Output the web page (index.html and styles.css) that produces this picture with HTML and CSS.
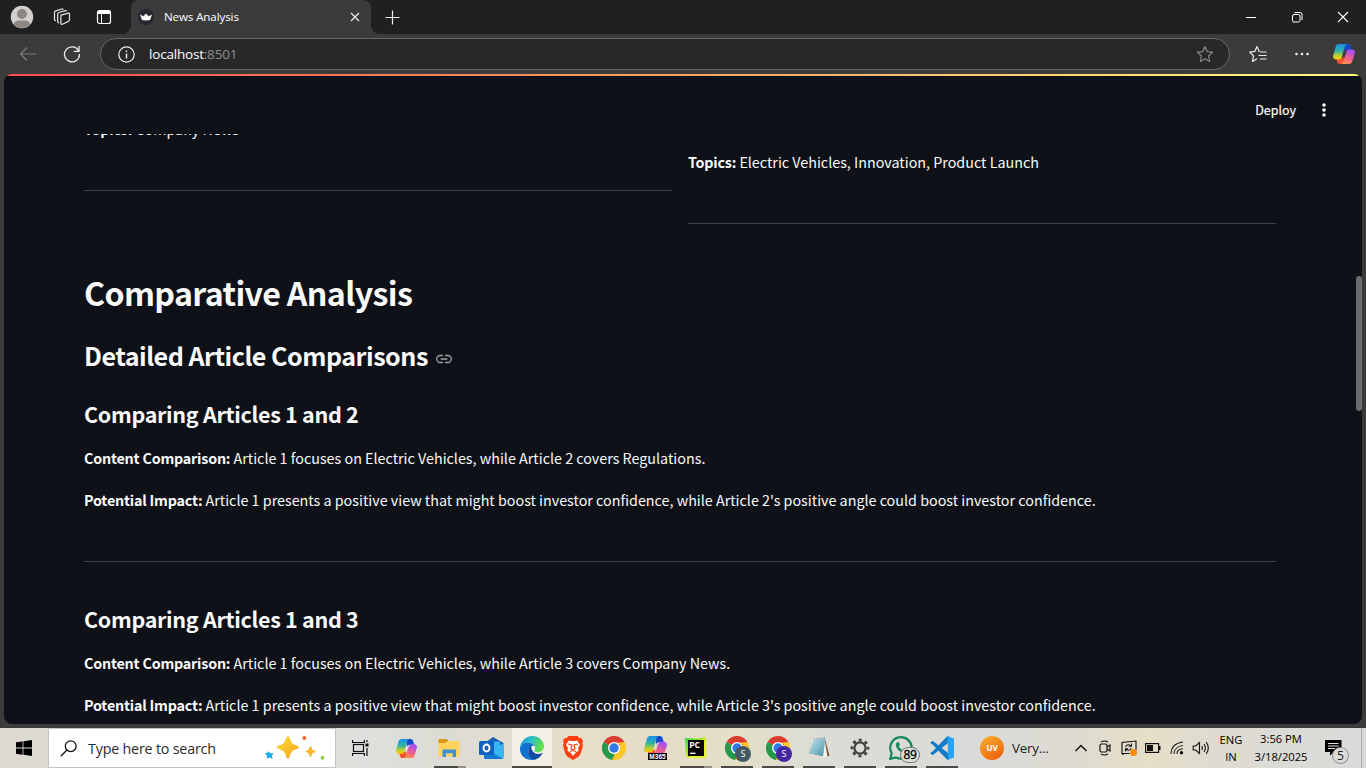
FILE: index.html
```html
<!DOCTYPE html>
<html lang="en">
<head>
<meta charset="utf-8">
<title>News Analysis</title>
<link rel="stylesheet" href="styles.css">
</head>
<body>
<svg class="defs" width="0" height="0" aria-hidden="true">
  <defs>
    <linearGradient id="cpL" x1="0" y1="0" x2="0" y2="1"><stop offset="0" stop-color="#1a8fe8"/><stop offset=".45" stop-color="#2fb3a5"/><stop offset=".75" stop-color="#b5d32e"/><stop offset="1" stop-color="#ffc800"/></linearGradient>
    <linearGradient id="cpR" x1=".3" y1="0" x2="0" y2="1"><stop offset="0" stop-color="#a850f0"/><stop offset=".5" stop-color="#f2608c"/><stop offset="1" stop-color="#ff9a3c"/></linearGradient>
    <linearGradient id="edgeA" x1="0" y1="0" x2="1" y2=".3"><stop offset="0" stop-color="#1b8fdc"/><stop offset=".5" stop-color="#2ac0c8"/><stop offset="1" stop-color="#63e04a"/></linearGradient>
    <linearGradient id="uv" x1="0" y1="0" x2=".6" y2="1"><stop offset="0" stop-color="#f5b42d"/><stop offset="1" stop-color="#f2640f"/></linearGradient>
    <linearGradient id="note" x1="0" y1="0" x2="1" y2="1"><stop offset="0" stop-color="#c5e6ee"/><stop offset="1" stop-color="#4c93a8"/></linearGradient>
    <linearGradient id="pyc" x1="0" y1="0" x2="1" y2="1"><stop offset="0" stop-color="#21d759"/><stop offset=".35" stop-color="#8be81f"/><stop offset=".6" stop-color="#e6f02a"/><stop offset="1" stop-color="#e6ee3a"/></linearGradient>
    <linearGradient id="star" x1="0" y1="0" x2="1" y2="1"><stop offset="0" stop-color="#ffdc38"/><stop offset="1" stop-color="#f7a31c"/></linearGradient>
    <symbol id="copilot" viewBox="0 0 24 24">
      <path d="M12 2h4.200c1.600 0 2.300.9 2.700 2.200L20 8h-4.500c-1.600 0-2.600.8-3 2.200z" fill="#1747c9"/>
      <path d="M12 22H7.800c-1.600 0-2.300-.9-2.700-2.200L4.300 16H9c1.400 0 2.200-.7 2.600-2z" fill="#f2542f"/>
      <path d="M7 2h8.200c-1.100 0-1.800.8-2.200 2l-3.200 11c-.5 1.700-1.400 2.500-3 2.500H3.700C1.600 17.500.7 15.600 1.200 13.600L3.600 5C4.200 3 5.200 2 7 2z" fill="url(#cpL)"/>
      <path d="M17 22H8.800c1.100 0 1.800-.8 2.200-2l3.200-9.500c.5-1.700 1.400-3 3-3h3.100c2.100 0 3 1.900 2.500 3.900L20.400 19c-.6 2-1.600 3-3.400 3z" fill="url(#cpR)"/>
    </symbol>
    <symbol id="chrome" viewBox="0 0 24 24">
      <path d="M12 12L1.600 6A12 12 0 0 1 22.400 6z" fill="#dc3b30"/>
      <path d="M12 12L22.400 6A12 12 0 0 1 12 24z" fill="#fdc727"/>
      <path d="M12 12v12A12 12 0 0 1 1.600 6z" fill="#24994a"/>
      <path d="M12 6h10.400a12 12 0 0 1 .9 2H12z" fill="#fdc727"/>
      <path d="M12 6h10.400L12 7z" fill="#dc3b30"/>
      <path d="M17.200 15L12 24l-2-.2 3-6z" fill="#fdc727"/>
      <path d="M6.800 15L1.600 6l5.400 5z" fill="#24994a"/>
      <circle cx="12" cy="12" r="6" fill="#fff"/><circle cx="12" cy="12" r="4.700" fill="#3478e8"/>
    </symbol>
  </defs>
</svg>

<div class="screen">
  <div class="tabstrip">
    <div class="tab-tools">
      <svg class="avatar" width="24" height="24" viewBox="0 0 24 24"><circle cx="12" cy="12" r="11.200" fill="#d2d0ce"/><circle cx="12" cy="9" r="5" fill="#8d8782"/><path d="M4 19.500c0-3 2.500-4 5-4h6c2.500 0 5 1 5 4a11.200 11.200 0 0 1-16 0z" fill="#8d8782"/></svg>
      <svg class="workspaces" width="18" height="18" viewBox="0 0 18 18" fill="none" stroke="#e6e6e6" stroke-width="1.200" stroke-linejoin="round"><path d="M8 7.200l7.200-2c.8-.2 1.300.2 1.300.9v5.700c0 .8-.4 1.300-1.100 1.600l-6 2.800c-.9.300-1.500 0-1.500-.8V7.900z"/><path d="M6.200 14.600c-1 .2-1.500-.2-1.500-1V6c0-.8.400-1.300 1.100-1.500l6.500-1.900c.8-.2 1.200.1 1.300.8"/><path d="M3 12.500c-1 .2-1.500-.2-1.500-1V4.300C1.500 3.500 2 3 2.700 2.800L8.900 1c.8-.2 1.200.1 1.300.7"/></svg>
      <svg class="vertical-tabs" width="16" height="16" viewBox="0 0 16 16" fill="none" stroke="#fff"><rect x="1.500" y="1.500" width="13" height="13" rx="2" stroke-width="1.200"/><path d="M2 3.500h12" stroke-width="3"/><path d="M5.500 5v9" stroke-width="1"/></svg>
    </div>
    <div class="tab">
      <svg width="16" height="16" viewBox="0 0 16 16"><circle cx="8" cy="8" r="8" fill="#262730"/><path d="M2 5.500l3.300 1.700L8 4.600l2.700 2.600L14 5.500l-2 5.500c-2 .5-6 .5-8 0z" fill="#fff"/></svg>
      <span class="tab-title">News Analysis</span>
      <svg width="10" height="10" viewBox="0 0 10 10" stroke="#eee" stroke-width="1.200"><path d="M1 1l8 8M9 1L1 9"/></svg>
    </div>
    <svg class="new-tab" width="15" height="15" viewBox="0 0 15 15" stroke="#eee" stroke-width="1.200"><path d="M7.500.5v14M.5 7.500h14"/></svg>
    <div class="window-buttons">
      <svg width="12" height="12" viewBox="0 0 12 12" stroke="#fff"><path d="M1 6.500h10"/></svg>
      <svg width="12" height="12" viewBox="0 0 12 12" fill="none" stroke="#fff"><rect x="1.500" y="3.500" width="7.500" height="7.500" rx="1.500"/><path d="M3.500 1.500h5.500a2 2 0 0 1 2 2V9"/></svg>
      <svg width="12" height="12" viewBox="0 0 12 12" stroke="#fff" stroke-width="1.100"><path d="M1 1l10 10M11 1L1 11"/></svg>
    </div>
  </div>

  <div class="toolbar">
    <svg class="back" width="18" height="16" viewBox="0 0 18 16" fill="none" stroke="#7c7c7c" stroke-width="1.200"><path d="M17 8H1.500M8 1.500L1.500 8 8 14.500"/></svg>
    <svg class="reload" width="18" height="18" viewBox="0 0 18 18" fill="none" stroke="#eee" stroke-width="1.300"><path d="M15.800 6.200A7.500 7.500 0 1 0 16.500 9"/><path d="M16 1v5.300h-5.300"/></svg>
    <div class="address">
      <svg width="17" height="17" viewBox="0 0 17 17" fill="none" stroke="#eee" stroke-width="1.200"><circle cx="8.500" cy="8.500" r="7.700"/><path d="M8.500 7.500v5M8.500 4.500V6" stroke-width="1.400"/></svg>
      <span class="url">localhost<span class="port">:8501</span></span>
      <svg class="fav" width="18" height="18" viewBox="0 0 18 18" fill="none" stroke="#858585" stroke-width="1.200" stroke-linejoin="round"><path d="M9 1.500l2.200 5.100 5.400.6-4 3.800 1.100 5.500L9 13.800l-4.700 2.700L5.400 11l-4-3.800 5.400-.6z"/></svg>
    </div>
    <svg class="favorites" width="18" height="18" viewBox="0 0 18 18" fill="none" stroke="#eee" stroke-width="1.200" stroke-linejoin="round"><path d="M10.800 6.500l-.6-.1L8 1.500 5.800 6.400l-5.100.7 3.800 3.800-1 5.500L8 13.700"/><path d="M11 7h6.500M9.500 10.500h8M11 14h6.500"/></svg>
    <svg class="more" width="16" height="4" viewBox="0 0 16 4" fill="#eee"><circle cx="2.500" cy="2" r="1.300"/><circle cx="8" cy="2" r="1.300"/><circle cx="13.500" cy="2" r="1.300"/></svg>
    <svg class="sidebar-copilot" width="24" height="24"><use href="#copilot"/></svg>
  </div>

  <div class="viewport">
    <div class="app">
      <div class="app-header">
        <span class="deploy">Deploy</span>
        <svg width="4" height="16" viewBox="0 0 4 16" fill="#fafafa"><circle cx="2" cy="3" r="1.800"/><circle cx="2" cy="8" r="1.800"/><circle cx="2" cy="13" r="1.800"/></svg>
      </div>
      <div class="content">
        <div class="columns">
          <div class="column">
            <p class="topics-a"><b>Topics:</b> Company News</p>
            <div class="rule"></div>
          </div>
          <div class="column column-right">
            <p><b>Topics:</b> Electric Vehicles, Innovation, Product Launch</p>
            <div class="rule"></div>
          </div>
        </div>
        <h1>Comparative Analysis</h1>
        <h2>Detailed Article Comparisons<svg width="16" height="16" viewBox="0 0 16 16" fill="none" stroke="#a3a6ab" stroke-width="1.300"><path d="M6.800 4.500H4.200a3.500 3.500 0 0 0 0 7h2.600M9.200 4.500h2.600a3.500 3.500 0 0 1 0 7H9.200M4.700 8h6.600"/></svg></h2>
        <h3>Comparing Articles 1 and 2</h3>
        <p><b>Content Comparison:</b> Article 1 focuses on Electric Vehicles, while Article 2 covers Regulations.</p>
        <p><b>Potential Impact:</b> Article 1 presents a positive view that might boost investor confidence, while Article 2's positive angle could boost investor confidence.</p>
        <div class="rule"></div>
        <h3 class="second">Comparing Articles 1 and 3</h3>
        <p><b>Content Comparison:</b> Article 1 focuses on Electric Vehicles, while Article 3 covers Company News.</p>
        <p><b>Potential Impact:</b> Article 1 presents a positive view that might boost investor confidence, while Article 3's positive angle could boost investor confidence.</p>
      </div>
      <div class="scroll-thumb"></div>
    </div>
  </div>

  <div class="taskbar">
    <div class="start"><svg width="16" height="16" viewBox="0 0 16 16"><path d="M0 2.300L6.600 1.400V7.600H0zM7.400 1.300L16 0v7.600H7.400zM0 8.400h6.600v6.300L0 13.800zM7.400 8.400H16V16l-8.600-1.200z"/></svg></div>
    <div class="search">
      <svg width="17" height="17" viewBox="0 0 17 17" fill="none" stroke="#111" stroke-width="1.300"><circle cx="10.700" cy="6.200" r="5.400"/><path d="M6.900 10L.8 16.200"/></svg>
      <span class="search-text">Type here to search</span>
      <svg class="sparkles" width="62" height="26" viewBox="0 0 62 26"><path d="M24 1c1.500 0 2.400 5.300 4.200 7.300S35 10.800 35 12.300s-5 2.300-6.800 4S25.500 24 24 24s-2.700-6-4.500-7.700-6.800-2.500-6.800-4 5-2 6.800-4S22.500 1 24 1z" fill="url(#star)"/><path d="M46.500 11c1 0 1.300 3 2 3.700s3.300 1 3.300 1.800-2.600 1-3.300 1.800-1 3.700-2 3.700-1.300-3-2-3.700-3.300-1-3.300-1.800 2.600-1 3.300-1.800 1-3.700 2-3.700z" fill="#fbb829"/><path d="M4.300 16.200l2.300 2.400 2.800-.7-1.500 3 .7 3-3-1.500-2.900 1.200.4-3L.6 18.200l3-.4z" fill="#19a9ef"/><circle cx="40.300" cy="3" r="2" fill="#f4682b"/><circle cx="58.500" cy="22.700" r="2" fill="#92cf4e"/></svg>
    </div>
    <div class="task-view"><svg width="17" height="16" viewBox="0 0 17 16" fill="none" stroke="#111" stroke-width="1.200"><rect x="1.500" y="4.500" width="10" height="7"/><path d="M.6 0v2.500h11.800V0M.6 16v-2.500h11.800V16M15 0v2M15 8v8"/><path d="M13.500 5h3" stroke-width="3"/></svg></div>
    <div class="apps">
      <div class="item item-first"><svg width="23" height="23"><use href="#copilot"/></svg></div>
      <div class="item open multi explorer"><svg width="22" height="20" viewBox="0 0 22 20"><path d="M.5 1h8.500l1.500 2.200L9 6H.5z" fill="#d9980f"/><path d="M.5 5h7L10 3h11.500v14.500a1 1 0 0 1-1 1h-19a1 1 0 0 1-1-1z" fill="#ffd35c"/><path d="M4.500 11.500h13.500v7.500h-3.300v-3.700H8V19H4.500z" fill="#3e8fd0"/></svg></div>
      <div class="item"><svg width="25" height="24" viewBox="0 0 25 24"><path d="M5 7.500L14 1l10.500 6v14a2 2 0 0 1-2 2H7a2 2 0 0 1-2-2z" fill="#1761b5"/><path d="M9 5.500h12v10H9z" fill="#37b6f2"/><path d="M14 14l10.500-7v14a2 2 0 0 1-2 2H8z" fill="#36b8f5"/><path d="M5 12l18.500 10.500-1 .5H7a2 2 0 0 1-2-2z" fill="#1479d4"/><rect x="0" y="5" width="15" height="14" rx="1.500" fill="#0f62bf"/><ellipse cx="7.500" cy="12" rx="3" ry="3.500" fill="none" stroke="#fff" stroke-width="1.900"/></svg></div>
      <div class="item open active"><svg width="24" height="24" viewBox="0 0 24 24"><path d="M0 12C.5 5 6 0 12.200 0 19 0 24 5 24 10.200c0 3.800-3 6-6.300 6-2.400 0-3.600-1-3.200-2 .4-1 .8-1.400.5-3C14.500 8.500 11.500 6.500 8 6.500 4 6.500 1 8.500 0 12z" fill="url(#edgeA)"/><path d="M0 12C1 8.500 4 6.500 8 6.500c3 0 5.600 1.500 6.600 3.500C12 9 8.500 10.500 8.500 15c0 4 3.500 7.500 7.500 8.200C8.500 26-.5 21 0 12z" fill="#1173cf"/><path d="M8.500 14c.2-2.500 1.300-4 3-4.800-1 3 1 8.300 6.500 8.800 2 .1 3.500-.5 4.800-1.200C20.500 21.500 17 24 13 23.500c-3-1-5-5-4.500-9.500z" fill="#124e9e"/></svg></div>
      <div class="item"><svg width="20" height="24" viewBox="0 0 20 24"><path d="M5.500 0h9l2 2.200 2-.3L20 5.500l-.7 2L20 9c-1.500 7-2.500 10-5 12l-5 3-5-3C2.500 19 1.500 16 0 9l.7-1.500-.7-2 1.500-3.600 2 .3z" fill="#fb3f12"/><path d="M6 4.500l4 .8 4-.8 3 4-2 3.500.7 2.500-3.200 2.300L10 20l-2.500-3.200-3.200-2.300L5 12 3 8.500z" fill="#fff"/><path d="M5 8l4 1-1 3.500L10 14l2-1.500L11 9l4-1M7 15.500l3-1 3 1" fill="none" stroke="#fb3f12" stroke-width="1.200"/></svg></div>
      <div class="item"><svg width="24" height="24"><use href="#chrome"/></svg></div>
      <div class="item"><svg class="m365" width="25" height="25"><use href="#copilot"/></svg><span class="m365-label">M365</span></div>
      <div class="item open multi"><svg width="22" height="22" viewBox="0 0 22 22"><path d="M0 1l13 .5L21 0l.5 21L8 21.500 1 20z" fill="url(#pyc)"/><rect x="3" y="3" width="16" height="16" fill="#050505"/><path d="M5 16.300h5.500" stroke="#fff" stroke-width="1.300"/><text x="4.200" y="10.800" class="pc-text">PC</text></svg></div>
      <div class="item open"><svg width="24" height="24"><use href="#chrome"/></svg><span class="profile gray">S</span></div>
      <div class="item open"><svg width="24" height="24"><use href="#chrome"/></svg><span class="profile purple">S</span></div>
      <div class="item open"><svg width="24" height="24" viewBox="0 0 24 24"><path d="M18 3l4.500 16.500-4 1.500-1-9z" fill="#7d6137"/><path d="M17.500 2.500l2.800 18-5 1.500z" fill="#eef3f4"/><path d="M7 3.500L18.500 2 16 20.500 1.500 17.500z" fill="url(#note)"/><path d="M1.500 17.500L16 20.500l-.5 1.500L2 19z" fill="#e5e0cf"/><path d="M7 3l11.500-1.500" stroke="#888" stroke-dasharray="1 1"/></svg></div>
      <div class="item open"><svg width="20" height="20" viewBox="0 0 20 20" fill="none" stroke="#424242"><circle cx="10" cy="10" r="5.600" stroke-width="2.300"/><circle cx="10" cy="10" r="8" stroke-width="2.700" stroke-dasharray="3 3.283" stroke-dashoffset="1.500"/></svg></div>
      <div class="item open"><svg width="24" height="24" viewBox="0 0 24 24"><path d="M1.200 22.800l1.500-5.500A10.700 10.700 0 1 1 7 21.400z" fill="none" stroke="#16895a" stroke-width="2.200"/><path d="M8 6.500c1-.8 1.800-.4 2 .3l.8 1.900c.1.700-1 1.500-1 1.900 1.200 2 2.500 3 4.300 3.700l1.500-1.500 2.700 1.300c.2 1.900-1.800 3-3.300 2.800C10.500 16.500 7 12 6.900 9.200c0-1.200.5-2.100 1.100-2.700z" fill="#16895a"/></svg><span class="count">89</span></div>
      <div class="item open"><svg width="24" height="24" viewBox="0 0 24 24"><path d="M17.500 0L24 3v18l-6.500 3L2.800 8.800.2 7l1.500-1.800c.4-.4 1-.4 1.500 0L18 17V7L3.200 18.800c-.5.4-1.100.4-1.500 0L.2 17l2.600-1.800z" fill="#1479c7"/><path d="M17.500 0L24 3v18l-6.500 3 .5-2z" fill="#2ca3f0"/></svg></div>
    </div>
    <div class="weather"><svg width="24" height="24" viewBox="0 0 24 24"><circle cx="12" cy="12" r="12" fill="url(#uv)"/><text x="12" y="15" text-anchor="middle" class="uv-text">UV</text></svg><span>Very...</span></div>
    <div class="tray">
      <svg width="24" height="8" viewBox="0 0 12 8" fill="none" stroke="#111" stroke-width="1.400"><path d="M.5 7L6 1.500 11.500 7"/></svg>
      <svg width="24" height="16" viewBox="0 0 12 16" fill="none" stroke="#111" stroke-width="1.200"><rect x="1" y="4" width="7" height="8" rx="1.500"/><path d="M8 7l3-2v6L8 9M2 2Q5.500 0 9 2M2 14q3.500 2 7 0"/></svg>
      <svg width="24" height="16" viewBox="0 0 17 16" fill="none" stroke="#111" stroke-width="1.100"><path d="M9 13.500H1.500V2.500l14-1.500v9M1.500 13.500L3 15"/><path d="M5.200 7c.6-2.600 4-3 5.300-1M11 3.500V6.200H8.300M10.800 8c-.6 2.600-4 3-5.300 1M5 11.500V8.800h2.700"/><circle cx="13" cy="12.500" r="3.500" fill="#ff8c0a" stroke="none"/></svg>
      <svg width="24" height="10" viewBox="0 0 16 10"><rect x=".6" y=".6" width="13" height="8.800" fill="none" stroke="#111" stroke-width="1.200"/><path d="M2 2h6v6H2zM14 3h1.500v4H14z" fill="#111"/></svg>
      <svg width="24" height="14" viewBox="0 0 14 14" fill="none" stroke="#222" stroke-width="1.100"><path d="M1 13C1 6 6 2 13 1M4 13c0-5 4-8 9-8.500M7 13c0-3 2.500-5 6-5.200"/><circle cx="11.500" cy="11.800" r="1.700" fill="#111" stroke="none"/></svg>
      <svg width="24" height="14" viewBox="0 0 17 14" fill="none" stroke="#111" stroke-width="1.100"><path d="M.7 5h2.500L7 1.500v11L3.200 9H.7zM9.300 5q1.400 2 0 4M11.500 3q2.800 4 0 8M13.800 1q4 6 0 12"/></svg>
      <div class="lang"><span>ENG</span><span>IN</span></div>
      <div class="clock"><span class="time">3:56 PM</span><span class="date">3/18/2025</span></div>
      <div class="notify"><svg width="17" height="16" viewBox="0 0 17 16"><path d="M0 0h16.500v12H9l-4 3.500V12H0z"/><path d="M3 3.500h10.500M3 6h10.500M3 8.500h7" stroke="#ddd"/></svg><span class="notify-count">5</span></div>
    </div>
    <div class="show-desktop"></div>
  </div>
</div>
</body>
</html>
```
FILE: styles.css
```css
* { box-sizing: border-box; }
body { margin: 0; font-family: "Open Sans", "Noto Sans", sans-serif; }
svg { display: block; flex: none; }
.defs { position: absolute; }
.screen { width: 1366px; height: 768px; overflow: hidden; display: flex; flex-direction: column; background: #3b3b3b; }

.tabstrip { height: 34px; background: #202020; display: flex; align-items: center; }
.tab-tools { width: 131px; display: flex; align-items: center; padding-left: 10px; }
.workspaces { margin-left: 19px; }
.vertical-tabs { margin-left: 25px; }
.tab { position: relative; width: 240px; height: 34px; background: #3b3b3b; border-radius: 8px 8px 0 0; display: flex; align-items: center; padding: 0 11px 0 7px; }
.tab::before, .tab::after { content: ""; position: absolute; bottom: 0; width: 8px; height: 8px; }
.tab::before { left: -8px; background: radial-gradient(circle at 0 0, transparent 7.500px, #3b3b3b 8px); }
.tab::after { right: -8px; background: radial-gradient(circle at 100% 0, transparent 7.500px, #3b3b3b 8px); }
.tab-title { flex: 1; margin: -2px 0 0 10px; font-size: 11.600px; letter-spacing: -.12px; color: #fff; }
.new-tab { margin-left: 14px; }
.window-buttons { margin-left: auto; display: flex; gap: 34px; padding-right: 17px; }

.toolbar { height: 40px; display: flex; align-items: center; padding-left: 19px; }
.reload { margin-left: 26px; }
.address { margin-left: 19px; width: 1130px; height: 32px; border: 1px solid #676767; border-radius: 16px; background: #282828; display: flex; align-items: center; padding: 0 15px 0 17px; }
.url { flex: 1; margin-left: 14px; font-size: 13.500px; letter-spacing: -.2px; color: #fff; }
.port { color: #8c8c8c; }
.favorites { margin-left: 19px; }
.more { margin-left: 27px; }
.sidebar-copilot { margin-left: 22px; }

.viewport { height: 654px; padding: 0 4px 4px; }
.app { position: relative; height: 650px; background: #0e1117; border-radius: 8px; overflow: hidden; font-family: "Noto Sans CJK JP", "Noto Sans CJK SC", sans-serif; color: #fafafa; }
.app::before { content: ""; position: absolute; left: 0; top: 0; width: 100%; height: 2px; background: linear-gradient(90deg, #ff4b4b, #fffd80); }
.app-header { height: 60px; display: flex; justify-content: flex-end; align-items: flex-end; padding: 0 36px 16px 0; gap: 26px; }
.deploy { font-size: 12.500px; line-height: 16px; -webkit-text-stroke: .2px #fafafa; }
.content { height: 590px; overflow: hidden; padding: 0 86px 0 80px; }
.columns { display: flex; gap: 16px; margin-top: -17px; height: 155px; }
.column { flex: 1; }
.column-right { padding-top: 33px; }
.rule { height: 1px; background: #3d4044; margin-top: 47px; }
p { margin: 0; height: 26px; line-height: 24px; font-size: 14.320px; white-space: nowrap; }
.topics-a { line-height: 23px; }
b, h1, h2, h3 { font-weight: 600; }
b { letter-spacing: -.2px; }
h1, h2, h3 { margin: 0; white-space: nowrap; }
h1 { height: 44px; line-height: 40px; font-size: 32.200px; letter-spacing: -.65px; }
h2 { height: 34px; line-height: 30px; font-size: 25.100px; letter-spacing: -.5px; margin-top: 24px; display: flex; gap: 8px; }
h2 svg { margin-top: 11px; }
h3 { height: 28px; line-height: 26px; font-size: 21.500px; letter-spacing: -.3px; margin-top: 27px; }
h3.second { margin-top: 44px; }
h3 + p { margin-top: 17px; }
p + p { margin-top: 16px; }
.scroll-thumb { position: absolute; right: 0; top: 202px; width: 6px; height: 135px; border-radius: 3px; background: #6b6c70; }

.taskbar { height: 40px; display: flex; background: linear-gradient(90deg, #dcd9d1 0, #dde0dc 27%, #dcdcd4 32%, #e7dec8 43%, #e4dcc6 48%, #e3dfc8 54%, #dcdcd6 60%, #dadbd9 72%, #dedbd0 79%, #e6dec6 84%, #dddbd2 89%, #d9dad9 100%); color: #1a1a1a; }
.start { width: 48px; display: flex; align-items: center; justify-content: center; }
.search { width: 288px; background: #fff; border: 1px solid #c4c4c4; display: flex; align-items: center; padding: 0 9px 0 11px; }
.search-text { flex: 1; margin-left: 11px; font-size: 14.300px; letter-spacing: -.2px; color: #2b2b2b; }
.task-view { width: 48px; display: flex; align-items: center; justify-content: center; }
.apps { display: flex; gap: 1px; margin-left: 5px; }
.item { position: relative; width: 40px; height: 40px; display: flex; align-items: center; justify-content: center; }
.item-first svg { margin-right: 5px; }
.explorer svg { margin-right: 2px; }
.open::after { content: ""; position: absolute; left: 4px; bottom: 0; width: 32px; height: 2px; background: #4b4a48; }
.multi::after { background: linear-gradient(90deg, #4b4a48 24px, #91908d 24px); }
.active { background: #f3efe7; }
.active::after { left: 0; width: 40px; }
.m365 { margin-top: -3px; }
.m365-label { position: absolute; left: 13px; top: 25px; width: 19px; height: 7px; background: #000; color: #fff; font: 700 6.500px/7px "Liberation Sans", sans-serif; text-align: center; }
.pc-text { font: 700 8.500px "Open Sans", sans-serif; fill: #fff; }
.profile { position: absolute; left: 18px; top: 18px; width: 16px; height: 16px; border-radius: 8px; color: #fff; font-size: 9px; line-height: 16px; text-align: center; }
.gray { background: #455a64; }
.purple { background: #4527a0; }
.count { position: absolute; left: 19px; top: 19px; width: 20px; height: 16px; border: 1px solid #777; border-radius: 8px; background: #deded9; font-size: 12px; line-height: 14px; text-align: center; color: #000; letter-spacing: -.4px; -webkit-text-stroke: .3px #000; }
.weather { width: 107px; display: flex; align-items: center; gap: 8px; padding-left: 18px; font-size: 13.300px; letter-spacing: -.2px; }
.uv-text { font: 700 8px "Open Sans", sans-serif; fill: #fff; }
.tray { flex: 1; display: flex; align-items: center; }
.lang, .clock { display: flex; flex-direction: column; align-items: center; font-size: 11.200px; line-height: 17px; color: #000; }
.lang { width: 24px; margin-left: 6px; }
.clock { width: 60px; margin-left: 8px; line-height: 18px; padding-bottom: 1px; }
.notify { position: relative; margin-left: 14px; }
.notify-count { position: absolute; left: 7px; top: 7px; width: 17px; height: 17px; border: 1px solid #888; border-radius: 9px; background: #dadad8; font-size: 12px; line-height: 15px; text-align: center; }
.show-desktop { width: 5px; border-left: 1px solid #aaa; }
```
